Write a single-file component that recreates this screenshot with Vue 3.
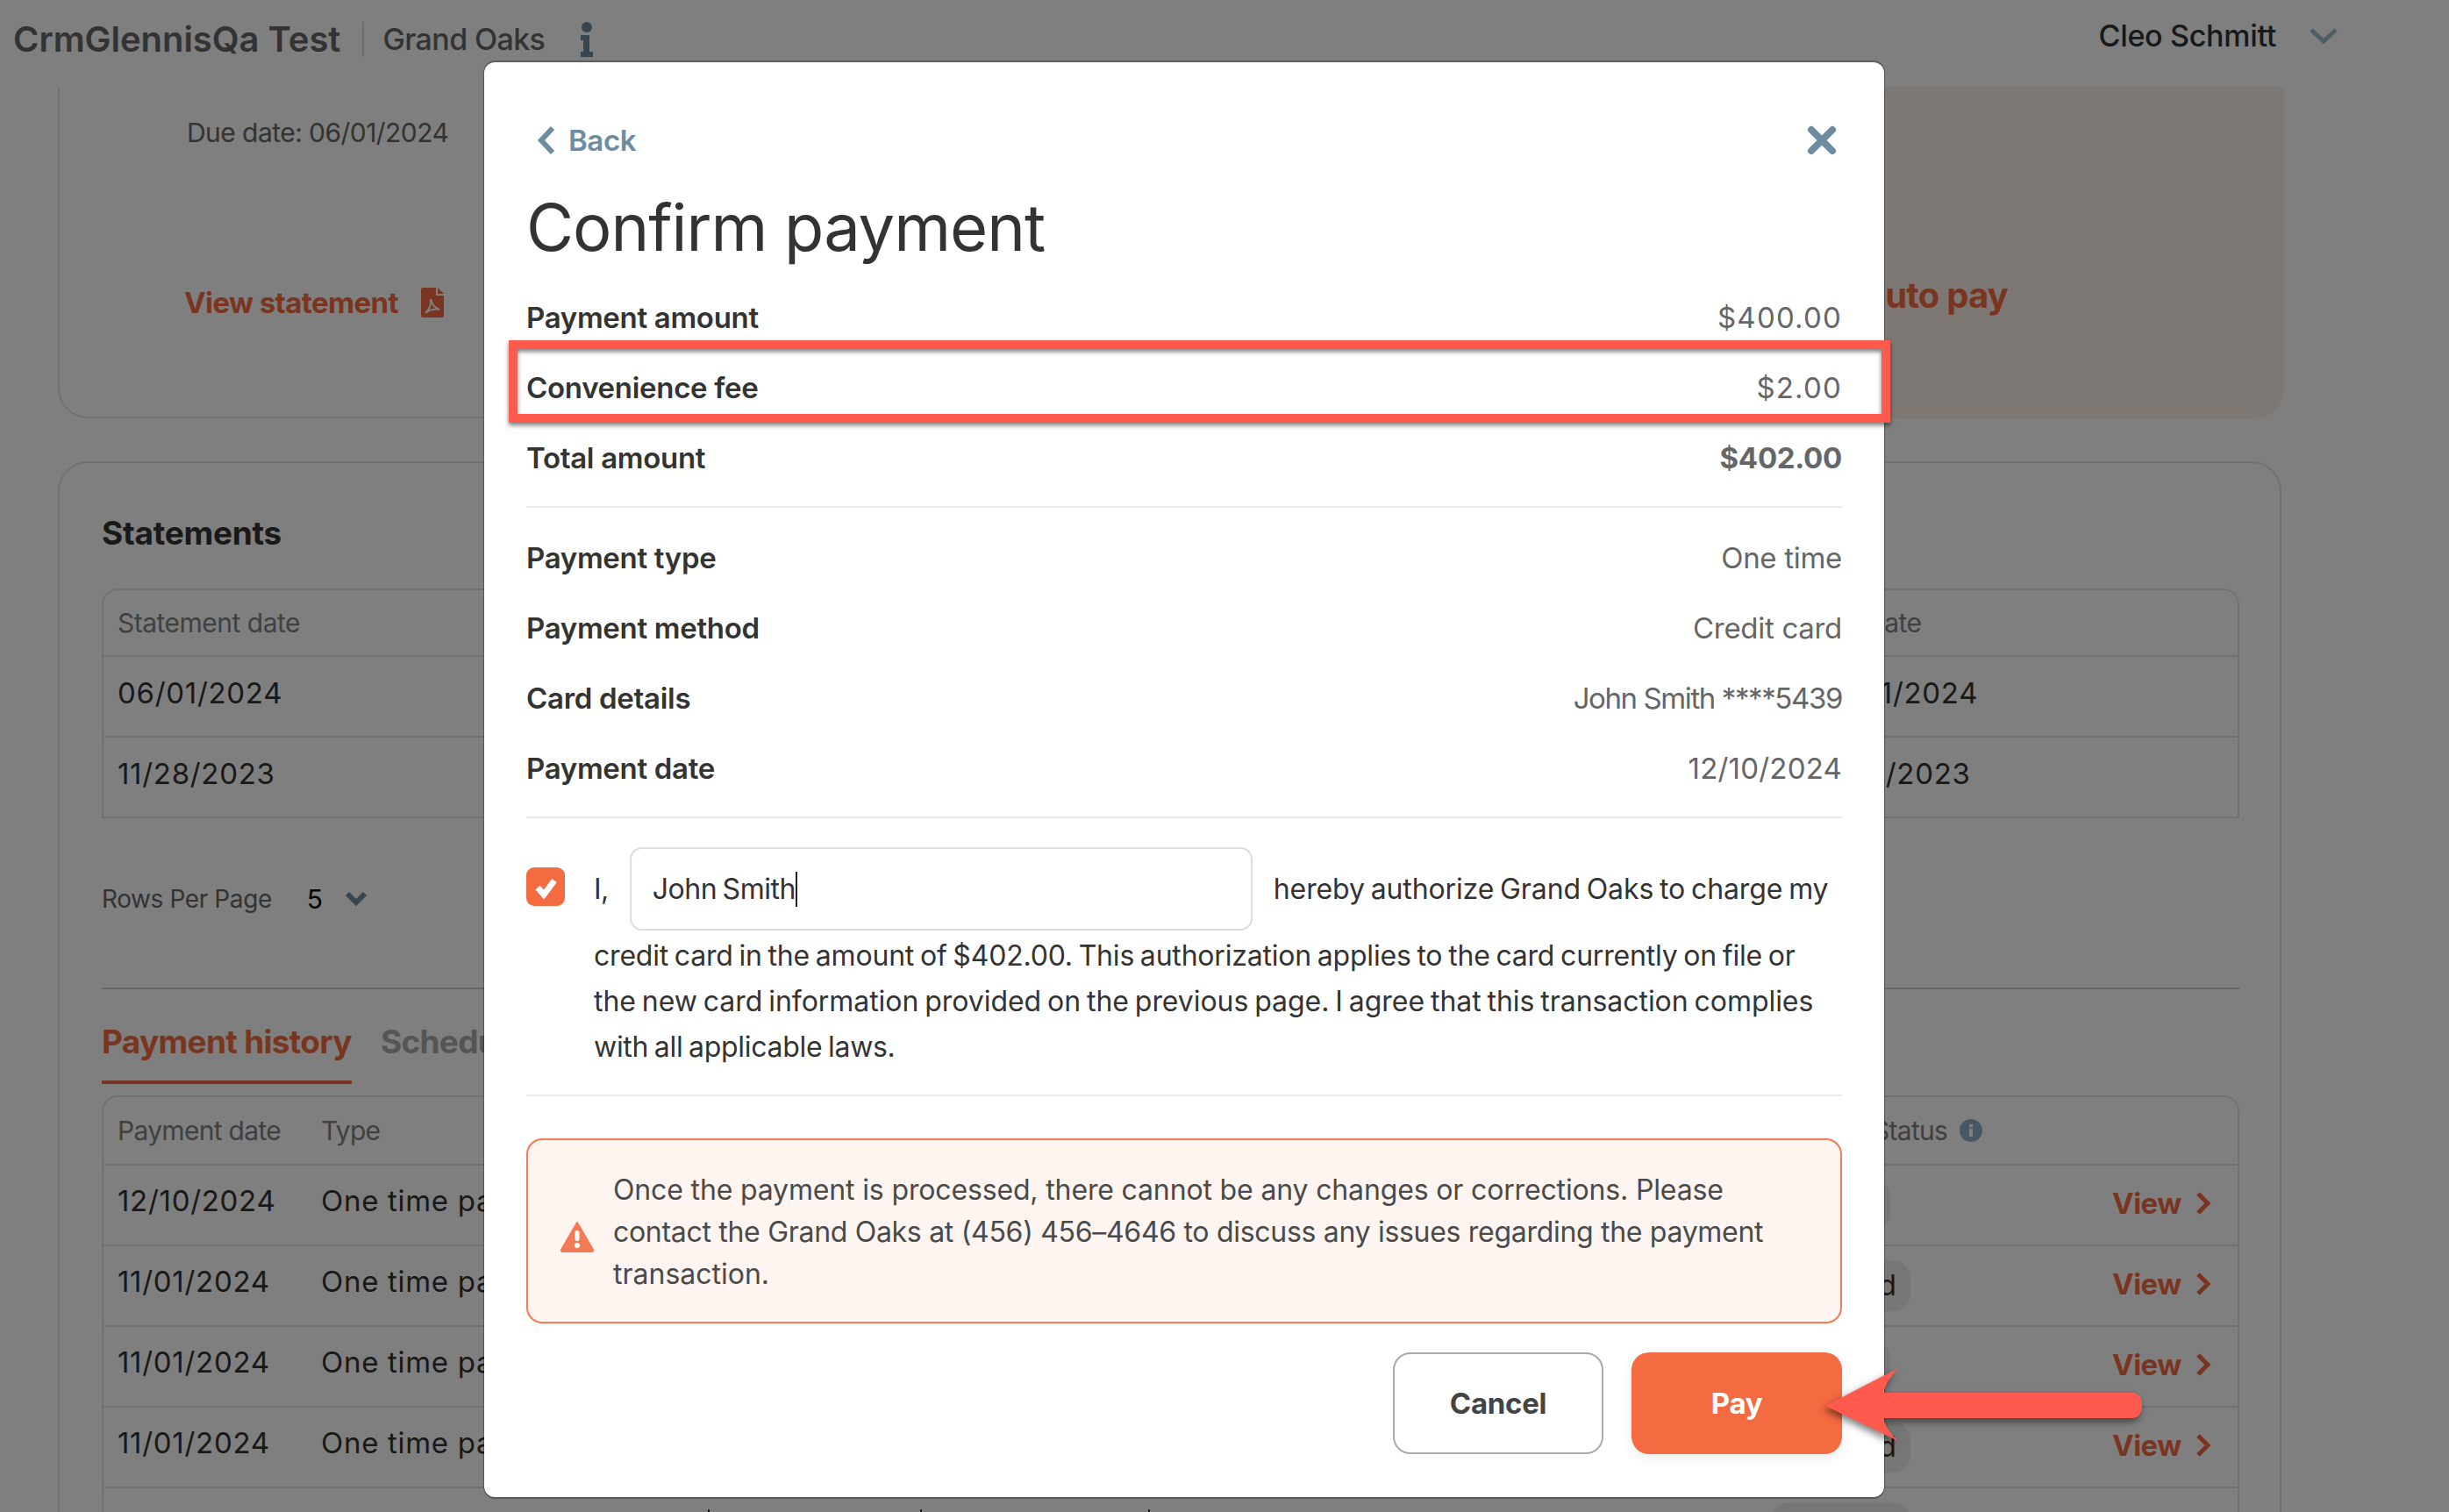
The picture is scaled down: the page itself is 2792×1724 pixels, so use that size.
<template>
  <div class="page">
    <header class="topbar">
      <span class="brand">CrmGlennisQa Test</span>
      <span class="brand-sep"></span>
      <span class="org">Grand Oaks</span>
      <svg class="info-i" viewBox="0 0 16 40" width="16" height="40"><circle cx="8" cy="6" r="6" /><path d="M1 15h10v19h4v6H1v-6h3V21H1z" /></svg>
      <span class="user">Cleo Schmitt</span>
      <svg class="user-chev" viewBox="0 0 34 20" width="34" height="20"><path d="M3 3l14 13L31 3" /></svg>
    </header>

    <main class="content">
      <section class="top-row">
        <div class="due-card">
          <div class="due">Due date: 06/01/2024</div>
          <div class="statement-link">
            <span>View statement</span>
            <svg viewBox="0 0 26 34" width="26" height="34">
              <path class="pdf" d="M0 2a2 2 0 0 1 2-2h15v9h9v23a2 2 0 0 1-2 2H2a2 2 0 0 1-2-2z" />
              <path class="pdf" d="M19 0l7 7h-7z" />
              <path class="pdf-curl" d="M11 13c1 5 3 9 10 12-5-1-11 0-16 4 4-4 7-10 6-16z" />
            </svg>
          </div>
        </div>
        <div class="auto-card">Set up auto pay</div>
      </section>

      <section class="main-card">
        <h2>Statements</h2>
        <div class="table statements">
          <div class="st-row head"><span>Statement date</span><span>Due date</span></div>
          <div v-for="r in statements" :key="r[0]" class="st-row"><span>{{ r[0] }}</span><span>{{ r[1] }}</span></div>
        </div>
        <div class="rows-per-page">
          <span class="rpp-label">Rows Per Page</span>
          <span class="rpp-value">5</span>
          <svg viewBox="0 0 26 18" width="26" height="18"><path d="M3 3l10 10L23 3" /></svg>
        </div>
        <div class="tabs">
          <span class="tab active">Payment history</span>
          <span class="tab">Scheduled payments</span>
        </div>
        <div class="table history">
          <div class="h-row head">
            <span>Payment date</span><span>Type</span>
            <span class="status-head">Status
              <svg viewBox="0 0 26 26" width="26" height="26"><circle cx="13" cy="13" r="13" /><rect x="11" y="11" width="4" height="9" fill="#fff" /><rect x="11" y="6" width="4" height="3.5" fill="#fff" /></svg>
            </span>
            <span></span>
          </div>
          <div v-for="(r, i) in history" :key="i" class="h-row">
            <span>{{ r.date }}</span>
            <span>One time payment</span>
            <span :class="['chip', { short: r.short }]">{{ r.status }}</span>
            <span class="view">View
              <svg viewBox="0 0 18 28" width="18" height="28"><path d="M3 3l11 11L3 25" /></svg>
            </span>
          </div>
        </div>
      </section>
      <span v-for="x in ticks" :key="x" class="tick" :style="{ left: x + 'px' }"></span>
    </main>

    <div class="overlay">
      <div class="modal">
        <div class="modal-top">
          <span class="back">
            <svg viewBox="0 0 22 34" width="22" height="34"><path d="M18 3L5 17l13 14" /></svg>
            Back
          </span>
          <svg class="close" viewBox="0 0 34 34" width="34" height="34"><path d="M5 5l24 24M29 5L5 29" /></svg>
        </div>
        <h1>Confirm payment</h1>

        <div v-for="r in amounts" :key="r[0]" class="row">
          <span class="label">{{ r[0] }}</span>
          <span :class="['val', r[2]]">{{ r[1] }}</span>
        </div>
        <hr class="rule first" />
        <div v-for="r in details" :key="r[0]" class="row">
          <span class="label">{{ r[0] }}</span>
          <span :class="['val', r[2]]">{{ r[1] }}</span>
        </div>
        <hr class="rule second" />

        <div class="auth">
          <span class="check">
            <svg viewBox="0 0 44 44" width="44" height="44"><path d="M13 23l7 8 12-16" /></svg>
          </span>
          <div class="auth-body">
            <div class="auth-first">
              <span>I,</span>
              <div class="name-input"><span class="caret">John Smith</span></div>
              <span class="t1">hereby authorize Grand Oaks to charge my</span>
            </div>
            <div class="t2">credit card in the amount of $402.00. This authorization applies to the card currently on file or</div>
            <div class="t3">the new card information provided on the previous page. I agree that this transaction complies</div>
            <div class="t4">with all applicable laws.</div>
          </div>
        </div>
        <hr class="rule third" />

        <div class="alert">
          <svg viewBox="0 0 40 36" width="40" height="36">
            <path d="M20 2L38 33a1.5 1.5 0 0 1-1 2H3a1.5 1.5 0 0 1-1-2z" fill="#f47b55" stroke="#f47b55" stroke-width="2" stroke-linejoin="round" />
            <rect x="17.5" y="11" width="5" height="12" rx="2" fill="#fff" />
            <circle cx="20" cy="28" r="3" fill="#fff" />
          </svg>
          <div class="alert-text">
            <div class="a1">Once the payment is processed, there cannot be any changes or corrections. Please</div>
            <div class="a2">contact the Grand Oaks at (456) 456–4646 to discuss any issues regarding the payment</div>
            <div class="a3">transaction.</div>
          </div>
        </div>

        <div class="actions">
          <button class="btn cancel">Cancel</button>
          <button class="btn pay">Pay</button>
        </div>

        <div class="highlight"></div>
      </div>

      <svg class="arrow" viewBox="2070 1550 390 110" width="390" height="110">
        <path d="M2081 1603L2164 1560Q2150 1575 2147 1588L2430 1588Q2442 1588 2442 1602Q2442 1617 2430 1617L2147 1617Q2150 1630 2164 1643Z" />
      </svg>
    </div>
  </div>
</template>

<script setup>
const statements = [
  ['06/01/2024', '06/01/2024'],
  ['11/28/2023', '11/28/2023'],
];
const history = [
  { date: '12/10/2024', status: 'Paid', short: true },
  { date: '11/01/2024', status: 'Failed' },
  { date: '11/01/2024', status: 'Paid', short: true },
  { date: '11/01/2024', status: 'Failed' },
  { date: '11/01/2024', status: 'Failed' },
];
const ticks = [807, 1049, 1309];
const amounts = [
  ['Payment amount', '$400.00', 'money'],
  ['Convenience fee', '$2.00', 'money'],
  ['Total amount', '$402.00', 'strong'],
];
const details = [
  ['Payment type', 'One time'],
  ['Payment method', 'Credit card'],
  ['Card details', 'John Smith ****5439', 'tight'],
  ['Payment date', '12/10/2024', 'date'],
];
</script>

<style>
html, body { margin: 0; background: #fff; overflow: hidden; }
</style>

<style scoped>
.page { width: 2792px; height: 1724px; overflow: hidden; position: relative; background: #fff; font-family: Inter, "Liberation Sans", sans-serif; color: #333; }
.topbar { height: 99px; display: flex; align-items: center; padding: 0 126px 10px 15px; box-sizing: border-box; }
.brand { font-size: 40px; font-weight: 600; color: #666; letter-spacing: -0.05px; }
.brand-sep { width: 2px; height: 40px; background: #d8d8d8; margin: 0 21px 0 25px; }
.org { font-size: 34px; font-weight: 500; color: #666; letter-spacing: -0.6px; }
.info-i { margin-left: 40px; fill: #6e8ca0; }
.user { margin-left: auto; margin-bottom: 9px; font-size: 34px; font-weight: 500; color: #333; letter-spacing: -0.3px; }
.user-chev { margin-left: 37px; margin-bottom: 7px; fill: none; stroke: #a0bccd; stroke-width: 5; }

.content { padding: 0 191px 0 66px; }
.top-row { display: flex; height: 378px; }
.due-card { flex: 1; border: 2px solid #dfe3e8; border-top: 0; border-right: 0; border-radius: 0 0 0 34px; padding: 32px 0 0 145px; box-sizing: border-box; }
.due { font-size: 30px; color: #666; letter-spacing: -0.55px; line-height: 40px; }
.statement-link { margin-top: 154px; margin-left: -3px; display: flex; align-items: center; gap: 26px; font-size: 33px; font-weight: 700; color: #f46a41; letter-spacing: -0.6px; }
.pdf { fill: #f46a41; }
.pdf-curl { fill: none; stroke: #fff; stroke-width: 2; }
.auto-card { width: 1000px; margin-right: -3px; background: #fdf0e8; border-radius: 0 0 34px 0; display: flex; justify-content: flex-end; padding: 213px 315px 0 0; box-sizing: border-box; font-size: 40px; font-weight: 700; color: #f46a41; letter-spacing: -0.8px; }

.main-card { margin-top: 49px; height: 1300px; border: 2px solid #dfe3e8; border-radius: 34px 34px 0 0; padding: 0 46px 0 48px; box-sizing: border-box; }
.main-card h2 { margin: 0; padding-top: 55px; height: 143px; box-sizing: border-box; font-size: 37px; line-height: 50px; font-weight: 700; color: #333; letter-spacing: -0.25px; }
.table { border: 2px solid #dfe3e8; border-bottom: 0; border-radius: 18px 18px 0 0; }
.st-row { display: grid; grid-template-columns: 1933px 1fr; padding: 0 0 8px 16px; height: 92px; align-items: center; border-bottom: 2px solid #dfe3e8; font-size: 33px; letter-spacing: 0.7px; color: #333; box-sizing: border-box; }
.st-row.head { height: 76px; padding-bottom: 0; font-size: 30px; letter-spacing: -0.5px; color: #808080; }
.rows-per-page { display: flex; align-items: center; height: 195px; padding-bottom: 10px; box-sizing: border-box; font-size: 28px; letter-spacing: -0.4px; color: #666; border-bottom: 2px solid #ccc; }
.rpp-value { margin-left: 40px; font-size: 30px; color: #000; }
.rows-per-page svg { margin-left: 25px; fill: none; stroke: #6e8ca0; stroke-width: 6; }
.tabs { display: flex; gap: 33px; height: 105px; padding-top: 38px; box-sizing: border-box; font-size: 37px; font-weight: 700; line-height: 44px; letter-spacing: -0.7px; color: #aaa; }
.tab { height: 66px; white-space: nowrap; }
.tab.active { color: #f46a41; border-bottom: 4px solid #f46a41; }
.history { margin-top: 16px; }
.h-row { display: grid; grid-template-columns: 232px 1654px 388px 1fr; padding: 0 0 10px 16px; height: 92px; align-items: center; border-bottom: 2px solid #dfe3e8; font-size: 33px; letter-spacing: 0.7px; color: #333; box-sizing: border-box; white-space: nowrap; }
.h-row.head { height: 78px; padding-bottom: 0; font-size: 30px; letter-spacing: -0.7px; color: #808080; }
.status-head { margin-left: 115px; display: flex; align-items: center; gap: 14px; }
.status-head svg { fill: #8fb0c8; }
.chip { width: 158px; height: 58px; margin-top: 10px; box-sizing: border-box; padding-right: 16px; text-align: right; line-height: 56px; letter-spacing: 0; background: #ececec; border-radius: 20px; }
.chip.short { width: 135px; }
.view { display: flex; align-items: center; gap: 16px; margin-top: 6px; font-size: 33px; font-weight: 700; color: #f46a41; letter-spacing: -0.5px; }
.view svg { fill: none; stroke: #f46a41; stroke-width: 5; }
.tick { position: absolute; top: 1721px; width: 2px; height: 3px; background: #333; }

.overlay { position: absolute; inset: 0; background: rgba(0, 0, 0, 0.5); }
.modal { position: absolute; left: 552px; top: 71px; width: 1596px; height: 1636px; box-sizing: border-box; background: #fff; border-radius: 12px; padding: 64px 48px 0; box-shadow: 0 2px 0 rgba(0,0,0,.3), 0 -2px 0 rgba(0,0,0,.25), 1px 0 0 rgba(0,0,0,.3), -1px 0 0 rgba(0,0,0,.3); color: #333; }
.modal-top { height: 50px; display: flex; justify-content: space-between; align-items: center; padding-right: 6px; }
.back { display: flex; align-items: center; gap: 14px; margin-left: 12px; font-size: 33px; font-weight: 600; color: #6e8ca0; letter-spacing: -0.4px; }
.back svg { fill: none; stroke: #6e8ca0; stroke-width: 6; }
.close { fill: none; stroke: #6e8ca0; stroke-width: 8; stroke-linecap: round; }
h1 { margin: 0; height: 136px; line-height: 148px; font-size: 74px; font-weight: 400; color: #333; letter-spacing: -1px; }
.row { display: flex; justify-content: space-between; align-items: center; height: 80px; padding-top: 2px; box-sizing: border-box; font-size: 33px; }
.label { font-weight: 600; color: #333; letter-spacing: -0.3px; }
.val { color: #666; letter-spacing: -0.3px; }
.val.strong { font-weight: 700; }
.val.money { letter-spacing: 1.2px; }
.val.tight { letter-spacing: -1.4px; }
.val.date { letter-spacing: 0.2px; }
.rule { margin: 0; height: 2px; border: 0; background: #e9e9e9; }
.rule.first { margin: 16px 0 16px; }
.rule.second { margin: 16px 0 30px; }
.rule.third { margin: 28px 0 48px; }
.auth { display: flex; gap: 33px; }
.check { width: 44px; height: 44px; margin-top: 26px; border-radius: 9px; background: #f46a41; flex: none; }
.check svg { fill: none; stroke: #fff; stroke-width: 7; }
.auth-body { flex: 1; font-size: 32px; line-height: 52px; color: #333; letter-spacing: -0.5px; word-spacing: -2px; white-space: nowrap; }
.auth-first { display: flex; align-items: center; height: 101px; }
.name-input { width: 710px; height: 95px; margin-left: 24px; border: 2px solid #ddd; border-radius: 14px; box-sizing: border-box; padding-left: 24px; display: flex; align-items: center; }
.caret { border-right: 2px solid #222; line-height: 40px; }
.t1 { margin-left: 24px; letter-spacing: -0.12px; }
.t2 { letter-spacing: -0.2px; }
.t3 { letter-spacing: -0.05px; }
.t4 { letter-spacing: -0.3px; }
.alert { height: 211px; box-sizing: border-box; border: 2px solid #f47b55; border-radius: 18px; background: #fef4f0; display: flex; align-items: center; padding: 3px 0 0 36px; }
.alert svg { flex: none; margin-top: 10px; }
.alert-text { margin-left: 21px; font-size: 32px; line-height: 48px; color: #4a4a4a; white-space: nowrap; }
.a1 { letter-spacing: -0.15px; }
.a2 { letter-spacing: -0.3px; }
.a3 { letter-spacing: 0; }
.actions { display: flex; justify-content: flex-end; gap: 32px; margin-top: 33px; }
.btn { height: 116px; border-radius: 20px; font-family: inherit; font-size: 33px; font-weight: 700; letter-spacing: -0.3px; }
.cancel { width: 240px; background: #fff; border: 2px solid #aaa; color: #444; }
.pay { width: 240px; background: #f46a41; border: 0; color: #fff; box-shadow: 0 4px 14px rgba(0,0,0,.08); }
.highlight { position: absolute; left: 28px; top: 317px; width: 1575px; height: 94px; box-sizing: border-box; border: 10px solid #ff5a4d; box-shadow: 0 3px 5px rgba(0,0,0,.5), inset 0 3px 5px rgba(0,0,0,.5); }
.arrow { position: absolute; left: 2070px; top: 1550px; fill: #ff5a4d; filter: drop-shadow(-2px 4px 4px rgba(0,0,0,.5)); }
</style>
